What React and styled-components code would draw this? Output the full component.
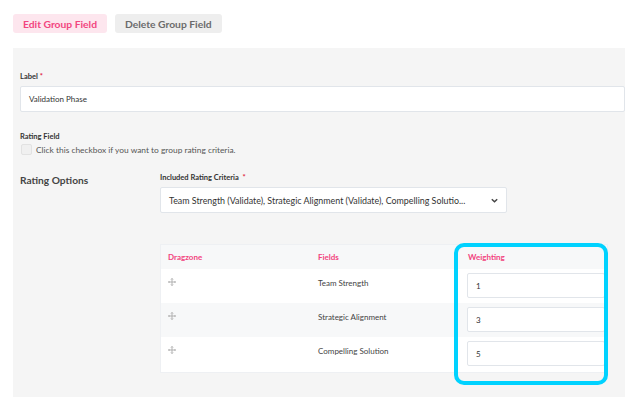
import React from "react"
import styled, { createGlobalStyle, css } from "styled-components"

const GlobalStyle = createGlobalStyle`
  body {
    margin: 0;
    background: #fff;
    font-family: "Source Sans Pro", Lato, "Liberation Sans", sans-serif;
    color: #333;
  }
`
const Page = styled.div`
  width: 627px;
  height: 397px;
  overflow: hidden;
  padding: 14px 2px 0 13px;
  box-sizing: border-box;
`
const ButtonRow = styled.div`
  display: flex;
  gap: 8px;
`
const TabButton = styled.button`
  height: 19px;
  padding: 0 10px;
  border: none;
  border-radius: 3px;
  font-family: Lato, sans-serif;
  font-weight: 700;
  font-size: 10.3px;
  background: #eeeeee;
  color: #6b6b6b;
  ${props => props.active && css`
    background: #fde6ee;
    color: #f2457f;
  `}
`
const Panel = styled.div`
  margin-top: 15px;
  background: #f5f5f5;
  padding: 24px 0 30px 7px;
  height: 380px;
  box-sizing: border-box;
`
const FieldLabel = styled.div`
  font-family: Lato, sans-serif;
  font-weight: 700;
  font-size: 7.5px;
  color: #333;
  margin-bottom: ${props => (props.tight ? 3 : 5)}px;
  span { color: #e0203c; margin-left: 2px; }
`
const TextInput = styled.div`
  background: #fff;
  border: 1px solid #e1e5ea;
  border-radius: 2px;
  height: 24px;
  display: flex;
  align-items: center;
  padding: 0 8px;
  font-family: Lato, sans-serif;
  font-size: 8px;
  color: #333;
`
const Section = styled.div`
  margin-top: ${props => props.gap || 0}px;
`
const CheckRow = styled.div`
  display: flex;
  align-items: center;
  gap: 4px;
  font-family: Lato, sans-serif;
  font-size: 8.4px;
  color: #555;
`
const Checkbox = styled.div`
  width: 9px;
  height: 9px;
  border: 1px solid #e2e2e2;
  border-radius: 2px;
  background: #f0f0f0;
  margin-left: 1px;
`
const OptionsGrid = styled.div`
  display: grid;
  grid-template-columns: 140px 1fr;
  margin-top: 18px;
`
const OptionsTitle = styled.div`
  font-family: Lato, sans-serif;
  font-weight: 700;
  font-size: 10.2px;
  color: #444;
  padding-top: 1px;
`
const SelectBox = styled(TextInput)`
  width: 347px;
  box-sizing: border-box;
  height: 26px;
  justify-content: space-between;
  padding: 0 7px 0 8px;
  font-size: 8.9px;
  white-space: nowrap;
`
const Table = styled.div`
  margin-top: 31px;
  width: 446px;
  background: #fff;
  border: 1px solid #eef0f3;
  position: relative;
`
const TRow = styled.div`
  display: grid;
  grid-template-columns: 150px 150px 1fr;
  height: ${props => props.h}px;
  background: ${props => (props.shade ? "#f7f8f9" : "#fff")};
  font-family: Lato, sans-serif;
  font-size: 8px;
  color: #444;
  & > div { padding-left: 7px; }
`
const HeadCell = styled.div`
  color: #f2457f;
  font-weight: 700;
  font-size: 8px;
  display: flex;
  align-items: center;
`
const Cell = styled.div`
  padding-top: 9px;
`
const WeightCell = styled.div`
  padding: 4px 2px 4px 0;
  margin-left: -1px;
`
const WeightInput = styled(TextInput)`
  height: 25px;
  box-sizing: border-box;
  padding-left: 8px;
`
const Highlight = styled.div`
  position: absolute;
  left: 293px;
  top: -2px;
  width: 146px;
  height: 134px;
  border: 4px solid #00d2ff;
  border-radius: 10px;
`

const DragIcon = () => (
  <svg width="8" height="8" viewBox="0 0 8 8" fill="none" stroke="#aaa" strokeWidth="0.9">
    <path d="M4 0.5v7M0.5 4h7M3 1.5l1-1 1 1M3 6.5l1 1 1-1M1.5 3l-1 1 1 1M6.5 3l1 1-1 1" />
  </svg>
)
const Chevron = () => (
  <svg width="9" height="9" viewBox="0 0 10 10" fill="none" stroke="#444" strokeWidth="1.6">
    <path d="M2 3.5l3 3 3-3" />
  </svg>
)

const rows = [
  { name: "Team Strength", weight: 1 },
  { name: "Strategic Alignment", weight: 3 },
  { name: "Compelling Solution", weight: 5 },
]

export default function App() {
  return (
    <Page>
      <GlobalStyle />
      <ButtonRow>
        <TabButton active>Edit Group Field</TabButton>
        <TabButton>Delete Group Field</TabButton>
      </ButtonRow>
      <Panel>
        <FieldLabel>Label<span>*</span></FieldLabel>
        <TextInput>Validation Phase</TextInput>
        <Section gap={20}>
          <FieldLabel tight>Rating Field</FieldLabel>
          <CheckRow>
            <Checkbox />
            Click this checkbox if you want to group rating criteria.
          </CheckRow>
        </Section>
        <OptionsGrid>
          <OptionsTitle>Rating Options</OptionsTitle>
          <div>
            <FieldLabel>Included Rating Criteria <span>*</span></FieldLabel>
            <SelectBox>
              Team Strength (Validate), Strategic Alignment (Validate), Compelling Solutio...
              <Chevron />
            </SelectBox>
            <Table>
              <TRow h={24} shade>
                <HeadCell>Dragzone</HeadCell>
                <HeadCell>Fields</HeadCell>
                <HeadCell>Weighting</HeadCell>
              </TRow>
              {rows.map((r, i) => (
                <TRow key={r.name} h={i === 2 ? 35 : 34} shade={i === 1}>
                  <Cell><DragIcon /></Cell>
                  <Cell>{r.name}</Cell>
                  <WeightCell>
                    <WeightInput>{r.weight}</WeightInput>
                  </WeightCell>
                </TRow>
              ))}
              <Highlight />
            </Table>
          </div>
        </OptionsGrid>
      </Panel>
    </Page>
  )
}
